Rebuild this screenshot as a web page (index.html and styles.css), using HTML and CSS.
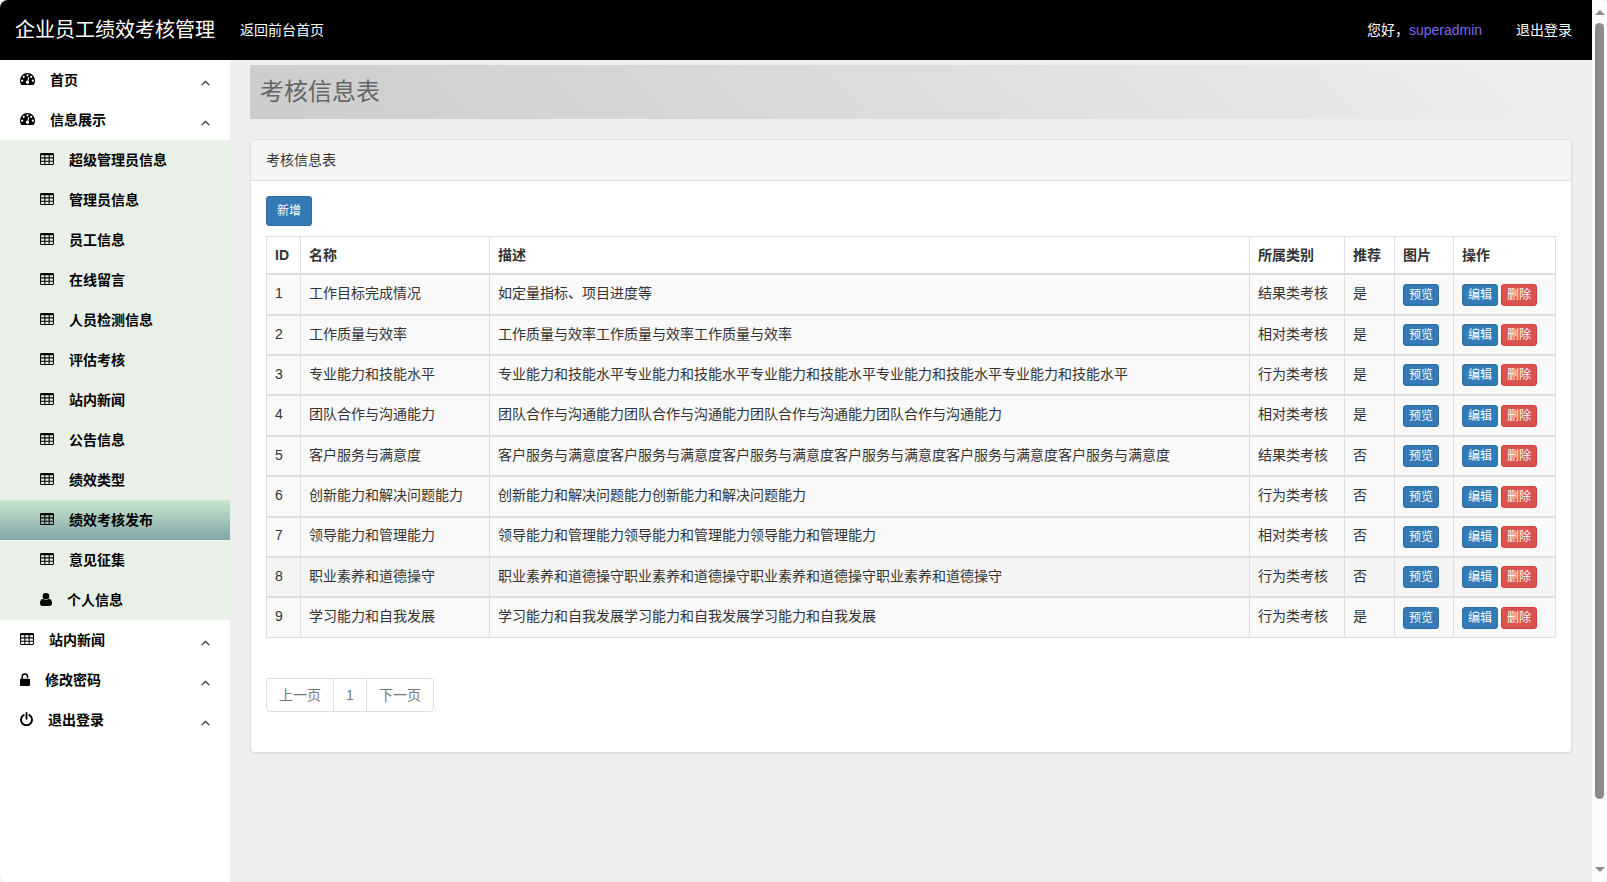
FILE: index.html
```html
<!DOCTYPE html>
<html lang="zh-CN">
<head>
<meta charset="utf-8">
<title>企业员工绩效考核管理</title>
<link rel="stylesheet" href="styles.css">
</head>
<body>
<svg class="defs" width="0" height="0">
  <symbol id="dash" viewBox="0 256 1792 1408" preserveAspectRatio="none"><path d="M384 1152q0-53-37.500-90.500t-90.500-37.500-90.500 37.500-37.500 90.500 37.500 90.500 90.500 37.500 90.500-37.500 37.500-90.500zm192-448q0-53-37.500-90.500t-90.500-37.500-90.500 37.500-37.500 90.500 37.500 90.500 90.500 37.500 90.500-37.500 37.500-90.500zm428 481l101-382q6-26-7.500-48.500t-38.500-29.500-48 6.500-30 39.500l-101 382q-60 5-107 43.500t-63 98.500q-20 77 20 146t117 89 146-20 89-117q16-60-6-117t-72-91zm660-33q0-53-37.500-90.500t-90.500-37.500-90.500 37.500-37.500 90.500 37.500 90.500 90.500 37.500 90.500-37.500 37.500-90.500zm-640-640q0-53-37.500-90.500t-90.500-37.500-90.500 37.500-37.500 90.500 37.500 90.500 90.500 37.500 90.500-37.500 37.500-90.500zm448 192q0-53-37.500-90.500t-90.500-37.500-90.500 37.500-37.500 90.500 37.500 90.500 90.500 37.500 90.500-37.500 37.500-90.500zm320 448q0 261-141 483-19 29-54 29h-1402q-35 0-54-29-141-221-141-483 0-182 71-348t191-286 286-191 348-71 348 71 286 191 191 286 71 348z"/></symbol>
  <symbol id="grid" viewBox="64 128 1664 1408" preserveAspectRatio="none"><path fill-rule="evenodd" d="M224 128H1568Q1728 128 1728 288V1376Q1728 1536 1568 1536H224Q64 1536 64 1376V288Q64 128 224 128ZM192 384H576V640H192ZM704 384H1088V640H704ZM1216 384H1600V640H1216ZM192 768H576V1024H192ZM704 768H1088V1024H704ZM1216 768H1600V1024H1216ZM192 1152H576V1408H192ZM704 1152H1088V1408H704ZM1216 1152H1600V1408H1216Z"/></symbol>
  <symbol id="user" viewBox="0 0 12 13"><circle cx="6" cy="3.300" r="3.300"/><path d="M3 5.800Q0 6.200 0 10.600Q0 13 2.200 13H9.800Q12 13 12 10.600Q12 6.200 9 5.800Q7.800 7.100 6 7.100T3 5.800Z"/></symbol>
  <symbol id="lock" viewBox="0 0 10 13"><path d="M2.200 6.500V3.700A2.700 2.700 0 0 1 7.600 3.700V4.400" fill="none" stroke="#000" stroke-width="1.500" stroke-linecap="round"/><rect y="5.800" width="10" height="7.200" rx="0.900"/></symbol>
  <symbol id="power" viewBox="0 0 13 14"><path d="M3.600 3.100A5.500 5.500 0 1 0 9.400 3.100M6.500 1V6.700" fill="none" stroke="#000" stroke-width="1.900" stroke-linecap="round"/></symbol>
  <symbol id="chev" viewBox="0 0 9 6"><path d="M0.700 5.200L4.500 1.300L8.300 5.200" fill="none" stroke="#222" stroke-width="1.200"/></symbol>
</svg>
<div class="window">
  <div class="page">
    <header class="topbar">
      <span class="brand">企业员工绩效考核管理</span>
      <span class="home">返回前台首页</span>
      <span class="hello">您好，</span><span class="name">superadmin</span>
      <span class="exit">退出登录</span>
    </header>
    <div class="body">
      <nav class="sidebar" id="nav"></nav>
      <main class="main">
        <h1 class="banner">考核信息表</h1>
        <section class="panel">
          <div class="panel-head">考核信息表</div>
          <div class="panel-body">
            <a class="add">新增</a>
            <div class="table" id="table">
              <div class="row head"><b>ID</b><b>名称</b><b>描述</b><b>所属类别</b><b>推荐</b><b>图片</b><b>操作</b></div>
            </div>
            <div class="pager"><span>上一页</span><span>1</span><span>下一页</span></div>
          </div>
        </section>
      </main>
    </div>
  </div>
  <div class="scroll"><i class="up"></i><i class="thumb"></i><i class="down"></i></div>
</div>
<script src="app.js"></script>
</body>
</html>
```
FILE: styles.css
```css
* { box-sizing: border-box; }
body {
  margin: 0;
  height: 882px;
  overflow: hidden;
  background: #f4f4f4;
  color: #333;
  font: 14px/20px "Liberation Sans", "Noto Sans CJK SC", sans-serif;
}
.defs { position: absolute; }
svg { display: block; flex: none; }
.window { display: flex; height: 882px; border-radius: 8px; overflow: hidden; background: #fcfcfc; }
.page { width: 1592px; display: flex; flex-direction: column; }
.topbar { height: 60px; background: #000; color: #fff; display: flex; align-items: center; padding: 0 20px 0 15px; }
.brand { font-size: 20px; width: 225px; }
.hello { margin-left: auto; width: 42px; }
.name { color: #7b68ee; width: 107px; }
.exit { width: 56px; }
.body { flex: 1; display: flex; background: #eee; }
.sidebar { width: 230px; background: #fff; color: #000; font-weight: 700; }
.item { height: 40px; display: flex; align-items: center; padding: 0 20px; }
.item span { margin-left: 15px; }
.item svg:first-child { margin-bottom: 2px; }
.item .chev { margin: 6px 0 0 auto; }
.sub { background: #e9f0e8; padding-left: 40px; }
.active { background: linear-gradient(#c8e8c8, #83a5ae); }
.main { flex: 1; padding: 5px 20px 0; }
.banner { margin: 0; height: 54px; padding: 0 10px; font-size: 24px; line-height: 54px; font-weight: 400; color: #666; background: linear-gradient(45deg, #ccc, #eee); }
.panel { margin-top: 20px; height: 614px; background: #fff; border: 1px solid #ddd; border-radius: 4px; box-shadow: 0 1px 1px rgba(0, 0, 0, .05); }
.panel-head { height: 41px; padding: 10px 15px; background: #f5f5f5; border-bottom: 1px solid #ddd; border-radius: 3px 3px 0 0; }
.panel-body { padding: 15px; }
.add { display: block; width: 46px; height: 30px; font-size: 12px; line-height: 28px; text-align: center; color: #fff; background: #337ab7; border: 1px solid #2e6da4; border-radius: 3px; }
.table { margin-top: 10px; width: 1290px; height: 402px; border: solid #ddd; border-width: 1px 1px 0 0; }
.row { display: grid; grid-template-columns: 34px 189px 760px 95px 50px 59px 102px; height: 40.390px; border-bottom: 2px solid #ddd; background: #f9f9f9; }
.row > * { border-left: 1px solid #ddd; padding: 7.950px 0 0 8px; white-space: nowrap; }
.row.head { height: 38.300px; background: #fff; }
.row.hover { background: #f5f5f5; }
.row:last-child { height: 39.600px; border-bottom-width: 1px; }
.row .acts { display: flex; gap: 3px; padding-top: 8.350px; }
.btn { width: 36px; height: 22px; font-size: 12px; line-height: 20px; text-align: center; color: #fff; background: #337ab7; border: 1px solid #2e6da4; border-radius: 3px; }
.btn.del { background: #d9534f; border-color: #d43f3a; }
.pager { display: flex; margin-top: 40px; width: 168px; height: 34px; border: 1px solid #ddd; border-radius: 4px; color: #777; line-height: 32px; text-align: center; }
.pager span { width: 67px; border-right: 1px solid #ddd; }
.pager span:nth-child(2) { width: 33px; }
.pager span:last-child { width: 66px; border: 0; }
.scroll { width: 15px; background: #fcfcfc; display: flex; flex-direction: column; align-items: center; }
.scroll i { display: block; }
.up { margin-top: 10px; border: solid transparent; border-width: 0 5px 5px; border-bottom-color: #8b8b8b; }
.thumb { margin-top: 8px; width: 9px; height: 776px; border-radius: 5px; background: #8b8b8b; }
.down { margin-top: 68px; border: solid transparent; border-width: 5px 5px 0; border-top-color: #8b8b8b; }
```
FILE: app.js
```js
const sizes = { dash: [15, 12], grid: [14, 12], user: [12, 13], lock: [10, 13], power: [13, 14] };
const menu = [
  ['dash', '首页'], ['dash', '信息展示'],
  ['grid', '超级管理员信息', 1], ['grid', '管理员信息', 1], ['grid', '员工信息', 1], ['grid', '在线留言', 1],
  ['grid', '人员检测信息', 1], ['grid', '评估考核', 1], ['grid', '站内新闻', 1], ['grid', '公告信息', 1],
  ['grid', '绩效类型', 1], ['grid', '绩效考核发布', 2], ['grid', '意见征集', 1], ['user', '个人信息', 1],
  ['grid', '站内新闻'], ['lock', '修改密码'], ['power', '退出登录']
];
document.getElementById('nav').innerHTML = menu.map(([icon, text, level]) => {
  const [w, h] = sizes[icon];
  return `<div class="item ${level ? 'sub' : ''} ${level === 2 ? 'active' : ''}"><svg width="${w}" height="${h}"><use href="#${icon}"/></svg><span>${text}</span>${level ? '' : '<svg class="chev" width="9" height="6"><use href="#chev"/></svg>'}</div>`;
}).join('');

const rows = [
  ['工作目标完成情况', '如定量指标、项目进度等', '结果', '是'],
  ['工作质量与效率', '工作质量与效率'.repeat(3), '相对', '是'],
  ['专业能力和技能水平', '专业能力和技能水平'.repeat(5), '行为', '是'],
  ['团队合作与沟通能力', '团队合作与沟通能力'.repeat(4), '相对', '是'],
  ['客户服务与满意度', '客户服务与满意度'.repeat(6), '结果', '否'],
  ['创新能力和解决问题能力', '创新能力和解决问题能力'.repeat(2), '行为', '否'],
  ['领导能力和管理能力', '领导能力和管理能力'.repeat(3), '相对', '否'],
  ['职业素养和道德操守', '职业素养和道德操守'.repeat(4), '行为', '否'],
  ['学习能力和自我发展', '学习能力和自我发展'.repeat(3), '行为', '是']
];
document.getElementById('table').insertAdjacentHTML('beforeend', rows.map((r, i) =>
  `<div class="row ${i === 7 ? 'hover' : ''}"><div>${i + 1}</div><div>${r[0]}</div><div>${r[1]}</div><div>${r[2]}类考核</div><div>${r[3]}</div><div class="acts"><a class="btn">预览</a></div><div class="acts"><a class="btn">编辑</a><a class="btn del">删除</a></div></div>`
).join(''));
```
